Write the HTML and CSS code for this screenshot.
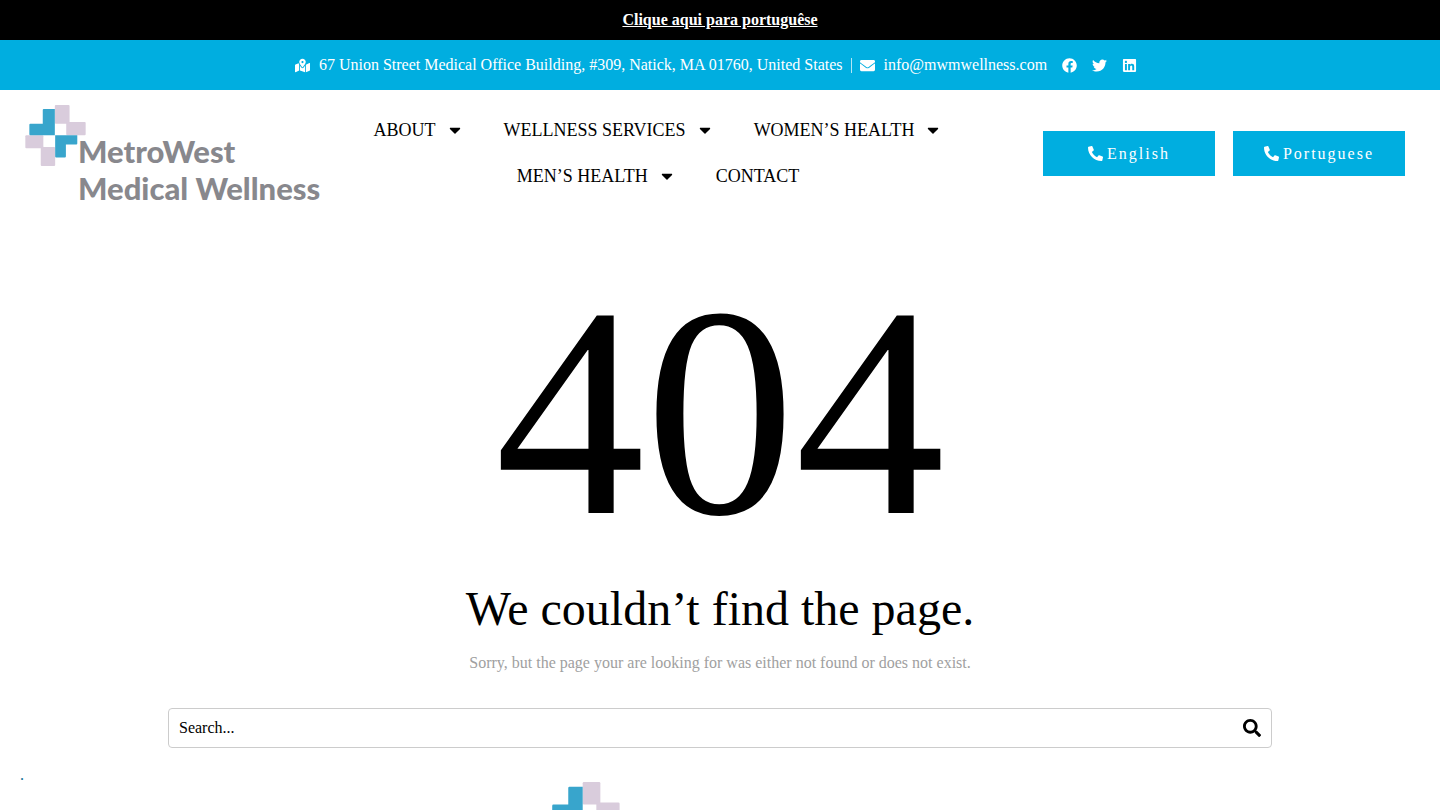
FILE: index.html
```
<!DOCTYPE html>
<html lang="en">

<head>
  <meta charset="UTF-8">
  <meta name="viewport" content="width=device-width, initial-scale=1.0">
  <title>Page not found - MetroWest Medical Wellness</title>
  <link rel="stylesheet" href="styles.css">
</head>

<body>
  <!-- Shared shapes -->
  <svg class="sprite" aria-hidden="true">
    <symbol id="cross" viewBox="0 0 180 182">
      <g fill="#d9ccdc">
        <rect x="88" y="0" width="44" height="56" rx="3" />
        <rect x="122" y="51" width="58" height="39" rx="3" />
        <rect x="0" y="90" width="54" height="39" rx="3" />
        <rect x="46" y="125" width="43" height="57" rx="3" />
      </g>
      <g fill="#38a5cc">
        <path d="M55 12h33v78H15q-3 0-3-3V59q0-3 3-3h37V15q0-3 3-3z" />
        <path d="M89 90h66v25q0 3-3 3h-31v36q0 3-3 3H92q-3 0-3-3z" />
      </g>
      <rect x="91" y="58" width="30" height="31" fill="#fff" />
      <rect x="55" y="93" width="31" height="31" fill="#fff" />
    </symbol>
    <symbol id="caret" viewBox="0 0 320 512">
      <path d="M31.3 192h257.3c17.8 0 26.7 21.5 14.1 34.1L174.1 354.8c-7.8 7.8-20.5 7.8-28.3 0L17.2 226.1C4.6 213.5 13.5 192 31.3 192z" />
    </symbol>
    <symbol id="phone" viewBox="0 0 512 512">
      <path d="M493.4 24.6l-104-24c-11.3-2.6-22.9 3.3-27.5 13.9l-48 112c-4.2 9.8-1.4 21.3 6.9 28l60.6 49.6c-36 76.7-98.9 140.5-177.2 177.2l-49.6-60.6c-6.8-8.3-18.2-11.1-28-6.9l-112 48C3.9 366.5-2 378.1.6 389.4l24 104C27.1 504.2 36.7 512 48 512c256.1 0 464-207.5 464-464 0-11.2-7.7-20.9-18.6-23.4z" transform="matrix(-1 0 0 1 512 0)" />
    </symbol>
  </svg>

  <div class="language-bar">
    <a href="#">Clique aqui para portuguêse</a>
  </div>

  <div class="contact-bar">
    <a href="#" class="contact-item">
      <svg class="icon" viewBox="0 0 576 512">
        <path d="M288 0c-69.59 0-126 56.41-126 126 0 56.26 82.35 158.8 113.9 196.02 6.39 7.54 17.82 7.54 24.2 0C331.65 284.8 414 182.26 414 126 414 56.41 357.59 0 288 0zm0 168c-23.2 0-42-18.8-42-42s18.8-42 42-42 42 18.8 42 42-18.8 42-42 42zM20.12 215.95A32.006 32.006 0 0 0 0 245.66v250.32c0 11.32 11.43 19.06 21.94 14.86L160 448V214.92c-8.84-15.98-16.07-31.54-21.25-46.42L20.12 215.95zM288 359.67c-14.07 0-27.38-6.18-36.51-16.96-19.66-23.2-40.57-49.62-59.49-76.72v182l192 64V266c-18.92 27.09-39.82 53.52-59.49 76.72-9.13 10.77-22.44 16.95-36.51 16.95zm266.06-198.51L416 224v288l139.88-55.95A31.996 31.996 0 0 0 576 426.34V176.02c0-11.32-11.43-19.06-21.94-14.86z" />
      </svg>
      <span>67 Union Street Medical Office Building, #309, Natick, MA 01760, United States</span>
    </a>
    <span class="divider"></span>
    <a href="#" class="contact-item">
      <svg class="icon" viewBox="0 0 512 512">
        <path d="M502.3 190.8c3.9-3.1 9.7-.2 9.7 4.7V400c0 26.5-21.5 48-48 48H48c-26.5 0-48-21.5-48-48V195.6c0-5 5.7-7.8 9.7-4.7 22.4 17.4 52.1 39.5 154.1 113.6 21.1 15.4 56.7 47.8 92.2 47.6 35.7.3 72-32.8 92.3-47.6 102-74.1 131.6-96.3 154-113.7zM256 320c23.2.4 56.6-29.2 73.4-41.4 132.7-96.3 142.8-104.7 173.4-128.7 5.8-4.5 9.2-11.5 9.2-18.9v-19c0-26.5-21.5-48-48-48H48c-26.5 0-48 21.5-48 48v19c0 7.4 3.4 14.3 9.2 18.9 30.6 23.9 40.7 32.4 173.4 128.7 16.8 12.2 50.2 41.8 73.4 41.4z" />
      </svg>
      <span>info@mwmwellness.com</span>
    </a>
    <div class="social">
      <a href="#" aria-label="Facebook">
        <svg class="icon" viewBox="0 0 512 512">
          <path d="M504 256C504 119 393 8 256 8S8 119 8 256c0 123.78 90.69 226.38 209.25 245V327.69h-63V256h63v-54.64c0-62.15 37-96.48 93.67-96.48 27.14 0 55.52 4.84 55.52 4.84v61h-31.28c-30.8 0-40.41 19.12-40.41 38.73V256h68.78l-11 71.69h-57.78V501C413.31 482.38 504 379.78 504 256z" />
        </svg>
      </a>
      <a href="#" aria-label="Twitter">
        <svg class="icon" viewBox="0 0 512 512">
          <path d="M459.37 151.716c.325 4.548.325 9.097.325 13.645 0 138.72-105.583 298.558-298.558 298.558-59.452 0-114.68-17.219-161.137-47.106 8.447.974 16.568 1.299 25.34 1.299 49.055 0 94.213-16.568 130.274-44.832-46.132-.975-84.792-31.188-98.112-72.772 6.498.974 12.995 1.624 19.818 1.624 9.421 0 18.843-1.3 27.614-3.573-48.081-9.747-84.143-51.98-84.143-102.985v-1.299c13.969 7.797 30.214 12.67 47.431 13.319-28.264-18.843-46.781-51.005-46.781-87.391 0-19.492 5.197-37.36 14.294-52.954 51.655 63.675 129.3 105.258 216.365 109.807-1.624-7.797-2.599-15.918-2.599-24.04 0-57.828 46.782-104.934 104.934-104.934 30.213 0 57.502 12.67 76.67 33.137 23.715-4.548 46.456-13.32 66.599-25.34-7.798 24.366-24.366 44.833-46.132 57.827 21.117-2.273 41.584-8.122 60.426-16.243-14.292 20.791-32.161 39.308-52.628 54.253z" />
        </svg>
      </a>
      <a href="#" aria-label="LinkedIn">
        <svg class="icon" viewBox="0 0 448 512">
          <path d="M416 32H31.9C14.3 32 0 46.5 0 64.3v383.4C0 465.5 14.3 480 31.9 480H416c17.6 0 32-14.5 32-32.3V64.3c0-17.8-14.4-32.3-32-32.3zM135.4 416H69V202.2h66.5V416zm-33.2-243c-21.3 0-38.5-17.3-38.5-38.5S80.9 96 102.2 96c21.2 0 38.5 17.3 38.5 38.5 0 21.3-17.2 38.5-38.5 38.5zm282.1 243h-66.4V312c0-24.8-.5-56.7-34.5-56.7-34.6 0-39.9 27-39.9 54.9V416h-66.4V202.2h63.7v29.2h.9c8.9-16.8 30.6-34.5 62.9-34.5 67.2 0 79.7 44.3 79.7 101.9V416z" />
        </svg>
      </a>
    </div>
  </div>

  <header class="header">
    <a href="#" class="logo">
      <svg class="logo-cross" aria-hidden="true"><use href="#cross" /></svg>
      <span class="logo-text">MetroWest<br>Medical Wellness</span>
    </a>

    <nav class="menu">
      <a href="#">ABOUT <svg class="caret"><use href="#caret" /></svg></a>
      <a href="#">WELLNESS SERVICES <svg class="caret"><use href="#caret" /></svg></a>
      <a href="#">WOMEN’S HEALTH <svg class="caret"><use href="#caret" /></svg></a>
      <a href="#">MEN’S HEALTH <svg class="caret"><use href="#caret" /></svg></a>
      <a href="#">CONTACT</a>
    </nav>

    <div class="call-buttons">
      <a href="#" class="call-button"><svg class="icon"><use href="#phone" /></svg>English</a>
      <a href="#" class="call-button"><svg class="icon"><use href="#phone" /></svg>Portuguese</a>
    </div>
  </header>

  <main class="not-found">
    <h1 class="code">404</h1>
    <h2 class="title">We couldn’t find the page.</h2>
    <p class="message">Sorry, but the page your are looking for was either not found or does not exist.</p>
    <form class="search-form" role="search">
      <input type="search" class="search-input" placeholder="Search..." aria-label="Search">
      <button type="submit" class="search-button" aria-label="Submit search">
        <svg viewBox="0 0 512 512">
          <path d="M505 442.7L405.3 343c-4.500-4.500-10.600-7-17-7H372c27.600-35.300 44-79.700 44-128C416 93.100 322.900 0 208 0S0 93.100 0 208s93.100 208 208 208c48.300 0 92.700-16.400 128-44v16.300c0 6.400 2.500 12.500 7 17l99.700 99.700c9.400 9.400 24.600 9.400 33.900 0l28.300-28.300c9.400-9.400 9.400-24.600.1-34zM208 336c-70.700 0-128-57.200-128-128 0-70.700 57.200-128 128-128 70.700 0 128 57.200 128 128 0 70.700-57.200 128-128 128z" />
        </svg>
      </button>
    </form>
  </main>

  <footer class="footer">
    <a href="#" class="footer-dot">.</a>
    <a href="#" class="logo footer-logo">
      <svg class="logo-cross" aria-hidden="true"><use href="#cross" /></svg>
      <span class="logo-text">MetroWest<br>Medical Wellness</span>
    </a>
  </footer>
</body>

</html>
```

FILE: styles.css
```
* {
  margin: 0;
  padding: 0;
  box-sizing: border-box;
}

html,
body {
  height: 100%;
}

body {
  background-color: #fff;
  color: #000;
  font-family: "Liberation Serif", "Times New Roman", serif;
  font-size: 16px;
  line-height: 20px;
  display: flex;
  flex-direction: column;
  overflow: hidden;
}

a {
  color: inherit;
  text-decoration: none;
}

svg {
  fill: currentColor;
  flex-shrink: 0;
}

.sprite {
  display: none;
}

.icon {
  display: block;
  width: 15px;
  height: 15px;
}

/* Top bars */
.language-bar {
  background: #000;
  color: #fff;
  padding: 10px;
  text-align: center;
  font-weight: bold;
}

.language-bar a {
  text-decoration: underline;
}

.contact-bar {
  background: #00aee0;
  color: #fff;
  padding: 15px;
  display: flex;
  justify-content: center;
  align-items: center;
}

.contact-item {
  display: flex;
  align-items: center;
  gap: 9px;
}

.divider {
  width: 1px;
  height: 15px;
  margin: 0 8px;
  background: #b3e6f5;
}

.social {
  display: flex;
  gap: 15px;
  padding: 0 8px 0 15px;
}

/* Header */
.header {
  display: grid;
  grid-template-columns: 298px 1fr 412px;
  gap: 17px;
  align-items: center;
  padding: 15px 35px 15px 25px;
}

.logo {
  display: flex;
  height: 96px;
  color: #88888d;
  font-family: Lato, sans-serif;
  font-weight: 900;
  font-size: 31px;
  line-height: 37px;
}

.logo-cross {
  width: 61px;
  height: 61px;
  margin-right: -8px;
}

.logo-text {
  padding-top: 28px;
  white-space: nowrap;
}

.menu {
  display: flex;
  flex-wrap: wrap;
  justify-content: center;
  font-size: 18px;
}

.menu a {
  display: flex;
  align-items: center;
  gap: 10px;
  padding: 13px 20px;
}

.caret {
  width: 18px;
  height: 18px;
}

.call-buttons {
  display: flex;
  gap: 18px;
  padding-left: 50px;
}

.call-button {
  flex: 1;
  display: flex;
  justify-content: center;
  align-items: center;
  gap: 4px;
  padding: 12px;
  background: #00aee0;
  color: #fff;
  font-size: 16px;
  line-height: 21px;
  letter-spacing: 2px;
}

/* 404 */
.not-found {
  width: 100%;
  max-width: 1144px;
  margin: 0 auto;
  padding: 46px 20px 0;
  text-align: center;
}

.code {
  font-size: 300px;
  font-weight: normal;
  line-height: 300px;
}

.title {
  margin-top: 18px;
  font-size: 48px;
  font-weight: normal;
  line-height: 58px;
}

.message {
  margin-top: 15px;
  color: #a0a0a0;
}

.search-form {
  display: flex;
  margin-top: 35px;
  border: 1px solid #ccc;
  border-radius: 4px;
}

.search-input {
  flex: 1;
  height: 38px;
  padding: 0 10px;
  border: none;
  outline: none;
  background: transparent;
  font: inherit;
}

.search-input::placeholder {
  color: #000;
  opacity: 1;
}

.search-button {
  width: 38px;
  border: none;
  background: transparent;
  cursor: pointer;
}

.search-button svg {
  display: block;
  width: 18px;
  height: 18px;
  margin: auto;
}

/* Footer */
.footer {
  padding: 17px 20px 20px;
}

.footer-dot {
  display: block;
  height: 17px;
  color: #0e6f93;
}

.footer-logo {
  width: 346px;
  height: 116px;
  margin: 0 auto;
  font-size: 37px;
  line-height: 44px;
}

.footer-logo .logo-cross {
  width: 73px;
  height: 73px;
}

.footer-logo .logo-text {
  padding-top: 34px;
}
```
